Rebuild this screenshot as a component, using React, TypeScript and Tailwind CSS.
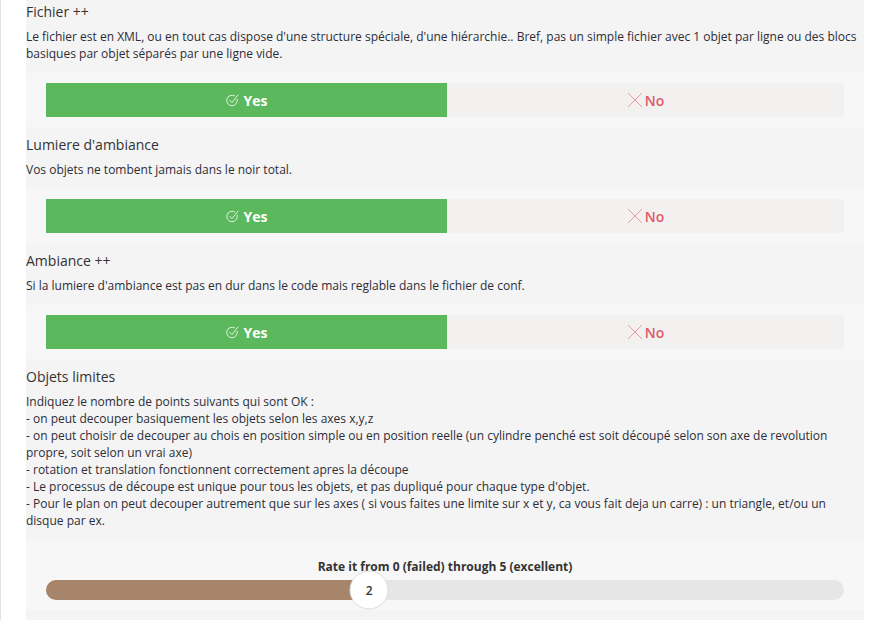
const questions = [
  {
    title: 'Fichier ++',
    lines: [
      "Le fichier est en XML, ou en tout cas dispose d'une structure spéciale, d'une hiérarchie.. Bref, pas un simple fichier avec 1 objet par ligne ou des blocs basiques par objet séparés par une ligne vide.",
    ],
  },
  {
    title: "Lumiere d'ambiance",
    lines: ['Vos objets ne tombent jamais dans le noir total.'],
  },
  {
    title: 'Ambiance ++',
    lines: ['Si la lumiere d\'ambiance est pas en dur dans le code mais reglable dans le fichier de conf.'],
  },
]

const limits = [
  'Indiquez le nombre de points suivants qui sont OK :',
  '- on peut decouper basiquement les objets selon les axes x,y,z',
  "- on peut choisir de decouper au chois en position simple ou en position reelle (un cylindre penché est soit découpé selon son axe de revolution propre, soit selon un vrai axe)",
  '- rotation et translation fonctionnent correctement apres la découpe',
  "- Le processus de découpe est unique pour tous les objets, et pas dupliqué pour chaque type d'objet.",
  '- Pour le plan on peut decouper autrement que sur les axes ( si vous faites une limite sur x et y, ca vous fait deja un carre) : un triangle, et/ou un disque par ex.',
]

function CheckIcon() {
  return (
    <svg width="13" height="13" viewBox="0 0 13 13" fill="none" className="mr-[5px] opacity-90">
      <path d="M11.2 5.2A5.3 5.3 0 1 1 8.6 1.8" stroke="white" strokeWidth="0.9" strokeLinecap="round" />
      <path d="M3.8 6.4L6 8.6L12 1" stroke="white" strokeWidth="0.9" strokeLinecap="round" strokeLinejoin="round" />
    </svg>
  )
}

function CrossIcon() {
  return (
    <svg width="16" height="16" viewBox="0 0 16 16" fill="none" className="mr-[2px]">
      <path d="M1 1L15 15M15 1L1 15" stroke="#e99aa4" strokeWidth="1" />
    </svg>
  )
}

function Question({ title, lines }: { title: string; lines: string[] }) {
  return (
    <div className="bg-[#f4f4f4] pt-2 pb-[11px]">
      <h3 className="text-[14px] leading-5 text-[#333] mb-[6px]">{title}</h3>
      {lines.map((l) => (
        <p key={l} className="text-[12px] leading-[17px] text-[#2d2d38]">{l}</p>
      ))}
    </div>
  )
}

function YesNo() {
  return (
    <div className="bg-[#f7f7f7] py-[10px] px-5">
      <div className="flex h-[34px]">
        <div className="w-[401px] bg-[#5cb85c] flex items-center justify-center text-white font-bold text-[14px]">
          <CheckIcon />
          Yes
        </div>
        <div className="flex-1 bg-[#f3f0f0] rounded-r-[3px] flex items-center justify-center text-[#dd5a6a] font-semibold text-[14px]">
          <CrossIcon />
          No
        </div>
      </div>
    </div>
  )
}

function Rating({ value }: { value: number }) {
  const pct = (value / 5) * 100
  return (
    <div className="bg-[#f7f7f7] px-5 pt-[19px] pb-[10px]">
      <div className="text-center text-[12px] leading-4 font-bold text-[#333] mb-[5px]">
        Rate it from 0 (failed) through 5 (excellent)
      </div>
      <div className="relative h-5 rounded-full bg-[#e6e6e6]">
        <div className="h-5 rounded-l-full bg-[#a6856a]" style={{ width: `calc(${pct}% + 4px)` }} />
        <div
          className="absolute top-1/2 -translate-x-1/2 -translate-y-1/2 w-[39px] h-[39px] rounded-full bg-white border border-[#dcdcdc] flex items-center justify-center text-[12px] font-semibold text-[#333]"
          style={{ left: `calc(${pct}% + 4px)` }}
        >
          {value}
        </div>
      </div>
    </div>
  )
}

export default function App() {
  return (
    <div className="w-[889px] h-[620px] overflow-hidden bg-white border-l border-[#e2e2e2] pl-[25px] pr-[25px]" style={{ fontFamily: '"Open Sans", "Noto Sans", sans-serif' }}>
      <div className="-mt-[6px]">
        {questions.map((q) => (
          <div key={q.title}>
            <Question title={q.title} lines={q.lines} />
            <YesNo />
          </div>
        ))}
        <Question title="Objets limites" lines={limits} />
        <Rating value={2} />
        <div className="bg-[#f4f4f4] h-10" />
      </div>
    </div>
  )
}
